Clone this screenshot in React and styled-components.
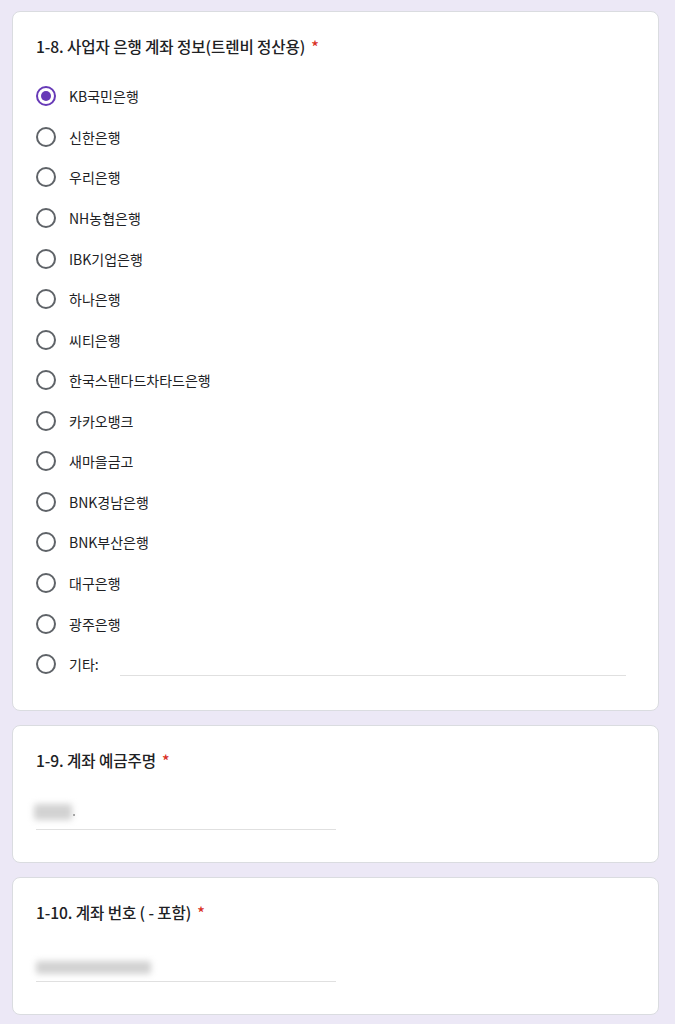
import React from "react";
import styled, { createGlobalStyle } from "styled-components";

const Global = createGlobalStyle`
  html, body { margin: 0; padding: 0; background: #ece8f6; }
  body { font-family: "Noto Sans CJK KR", "Noto Sans", Roboto, sans-serif; color: #202124; }
`;

const Page = styled.div`
  display: flex;
  flex-direction: column;
  gap: 14px;
  padding: 11px 16px 10px 12px;
`;

const Card = styled.div`
  background: #fff;
  border: 1px solid #dadce0;
  border-radius: 8px;
  padding: 22px 23px ${(p) => p.$pb || 32}px 23px;
`;

const Title = styled.div`
  font-size: 15.6px;
  line-height: 24px;
  height: 24px;
  font-weight: 500;
  letter-spacing: -0.1px;
`;

const Star = styled.span`
  color: #d93025;
  margin-left: 6px;
`;

const Options = styled.div`
  display: flex;
  flex-direction: column;
  margin-top: 18px;
`;

const Row = styled.label`
  display: flex;
  align-items: center;
  height: 40.57px;
  gap: 13px;
  font-size: 14px;
`;

const Radio = styled.span`
  box-sizing: border-box;
  width: 20px;
  height: 20px;
  border-radius: 50%;
  border: 2px solid ${(p) => (p.$on ? "#673ab7" : "#5f6368")};
  display: flex;
  align-items: center;
  justify-content: center;
  flex: none;
  &::after {
    content: "";
    width: 10px;
    height: 10px;
    border-radius: 50%;
    background: #673ab7;
    display: ${(p) => (p.$on ? "block" : "none")};
  }
`;

const OtherLine = styled.div`
  flex: 1;
  margin-left: 8px;
  margin-right: 9px;
  height: 24px;
  border-bottom: 1px solid #e0e0e0;
  align-self: center;
  transform: translateY(-1px);
`;

const Input = styled.div`
  width: 300px;
  height: 32px;
  margin-top: 25px;
  border-bottom: 1px solid #e0e0e0;
  display: flex;
  align-items: center;
`;

const Blur = styled.div`
  height: ${(p) => p.$h}px;
  width: ${(p) => p.$w}px;
  margin-left: ${(p) => p.$ml}px;
  margin-top: ${(p) => p.$mt}px;
  background: #d2d2d2;
  filter: blur(3px);
  border-radius: 2px;
`;

const Dot = styled.span`
  width: 2px;
  height: 2px;
  background: #999;
  margin-left: 1px;
  margin-top: 4px;
`;

const banks = [
  "KB국민은행",
  "신한은행",
  "우리은행",
  "NH농협은행",
  "IBK기업은행",
  "하나은행",
  "씨티은행",
  "한국스탠다드차타드은행",
  "카카오뱅크",
  "새마을금고",
  "BNK경남은행",
  "BNK부산은행",
  "대구은행",
  "광주은행",
];

export default function App() {
  return (
    <>
      <Global />
      <Page>
        <Card $pb={26}>
          <Title>
            1-8. 사업자 은행 계좌 정보(트렌비 정산용)<Star>*</Star>
          </Title>
          <Options>
            {banks.map((b, i) => (
              <Row key={b}>
                <Radio $on={i === 0} />
                <span>{b}</span>
              </Row>
            ))}
            <Row>
              <Radio />
              <span>기타:</span>
              <OtherLine />
            </Row>
          </Options>
        </Card>
        <Card>
          <Title>
            1-9. 계좌 예금주명<Star>*</Star>
          </Title>
          <Input>
            <Blur $w={38} $h={16} $ml={-2} $mt={-2} />
            <Dot />
          </Input>
        </Card>
        <Card>
          <Title>
            1-10. 계좌 번호 ( - 포함)<Star>*</Star>
          </Title>
          <Input>
            <Blur $w={115} $h={13} $ml={0} $mt={4} />
          </Input>
        </Card>
      </Page>
    </>
  );
}
